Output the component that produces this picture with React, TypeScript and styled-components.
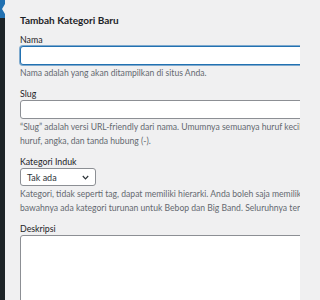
import React from "react";
import styled, { createGlobalStyle } from "styled-components";

const Global = createGlobalStyle`
  html, body { margin: 0; padding: 0; background: #f0f0f1; overflow: hidden; }
  body { font-family: Lato, "Liberation Sans", sans-serif; }
`;

const Page = styled.div`
  display: flex;
  width: 300px;
  height: 300px;
  overflow: hidden;
  background: #f0f0f1;
`;

const Sidebar = styled.div`
  flex: 0 0 5px;
  background: #1d2327;
  display: flex;
  flex-direction: column;
`;

const CurrentItem = styled.div`
  position: relative;
  height: 18px;
  background: #2271b1;
  &::after {
    content: "";
    position: absolute;
    right: 0;
    top: 4px;
    border-style: solid;
    border-width: 5px 3px 5px 0;
    border-color: transparent #f0f0f1 transparent transparent;
  }
`;

const Main = styled.div`
  flex: 1 0 auto;
  padding: 13px 0 0 15px;
  width: 420px;
  color: #3c434a;
`;

const Heading = styled.h2`
  margin: 0 0 7px;
  font-size: 10px;
  line-height: 14px;
  font-weight: 700;
  color: #1d2327;
  white-space: nowrap;
`;

const Field = styled.div`
  display: flex;
  flex-direction: column;
  align-items: flex-start;
  margin-bottom: 8px;
`;

const Label = styled.label`
  display: block;
  font-size: 8.8px;
  line-height: 12px;
  color: #1d2327;
  white-space: nowrap;
`;

const TextInput = styled.div<{ $focused?: boolean }>`
  box-sizing: border-box;
  width: 100%;
  height: 19px;
  background: #fff;
  border: 1px solid ${(p) => (p.$focused ? "#2271b1" : "#8c8f94")};
  border-radius: 3px 0 0 3px;
  box-shadow: ${(p) => (p.$focused ? "0 0 0 1px rgba(34,113,177,0.55)" : "none")};
`;

const Desc = styled.p`
  margin: 1px 0 0;
  font-size: 8.6px;
  line-height: 14px;
  color: #646970;
  white-space: nowrap;
`;

const Select = styled.div`
  box-sizing: border-box;
  width: 76px;
  height: 18px;
  display: flex;
  align-items: center;
  justify-content: space-between;
  padding: 0 6px 0 6px;
  background: #fff;
  border: 1px solid #8c8f94;
  border-radius: 3px;
  font-size: 9px;
  color: #2c3338;
`;

const Chevron = styled.svg`
  width: 7px;
  height: 5px;
`;

const TextArea = styled.div`
  box-sizing: border-box;
  width: 100%;
  height: 80px;
  background: #fff;
  border: 1px solid #8c8f94;
  border-radius: 3px 0 0 0;
`;

export default function App() {
  return (
    <>
      <Global />
      <Page>
        <Sidebar>
          <CurrentItem />
        </Sidebar>
        <Main>
          <Heading>Tambah Kategori Baru</Heading>
          <Field>
            <Label>Nama</Label>
            <TextInput $focused />
            <Desc>Nama adalah yang akan ditampilkan di situs Anda.</Desc>
          </Field>
          <Field>
            <Label>Slug</Label>
            <TextInput />
            <Desc>
              “Slug” adalah versi URL-friendly dari nama. Umumnya semuanya huruf kecil dan hanya mengandung
              <br />
              huruf, angka, dan tanda hubung (-).
            </Desc>
          </Field>
          <Field>
            <Label>Kategori Induk</Label>
            <Select>
              <span>Tak ada</span>
              <Chevron viewBox="0 0 7 5">
                <path d="M0.8 1 L3.5 3.8 L6.2 1" fill="none" stroke="#2c3338" strokeWidth="1.2" />
              </Chevron>
            </Select>
            <Desc>
              Kategori, tidak seperti tag, dapat memiliki hierarki. Anda boleh saja memiliki kategori Jazz, dan di
              <br />
              bawahnya ada kategori turunan untuk Bebop dan Big Band. Seluruhnya terserah Anda.
            </Desc>
          </Field>
          <Field>
            <Label>Deskripsi</Label>
            <TextArea />
          </Field>
        </Main>
      </Page>
    </>
  );
}
